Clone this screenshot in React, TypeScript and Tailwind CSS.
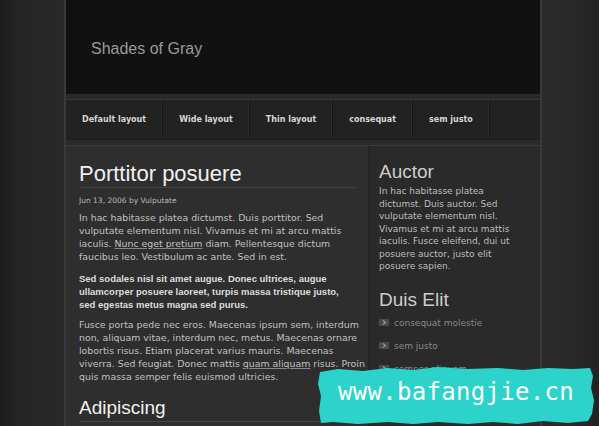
import type { ReactNode } from 'react';

const navItems = ['Default layout', 'Wide layout', 'Thin layout', 'consequat', 'sem justo'];

const links = ['consequat molestie', 'sem justo', 'semper aliquam'];

function Arrow() {
  return (
    <svg width="10" height="7" viewBox="0 0 10 7" className="shrink-0">
      <rect x="0" y="0" width="10" height="7" fill="#4a4a4a" />
      <path d="M4 1.5 L6.5 3.5 L4 5.5" fill="none" stroke="#9a9a9a" strokeWidth="1.2" />
    </svg>
  );
}

function Heading({ children, className }: { children: ReactNode; className?: string }) {
  return (
    <h2
      className={
        'font-["Liberation_Sans",Arial,sans-serif] text-[#f0f0f0] border-b border-[#444444] whitespace-nowrap ' +
        (className ?? '')
      }
    >
      {children}
    </h2>
  );
}

function Watermark() {
  return (
    <div className="absolute left-[318px] top-[366px] w-[276px] h-[60px]">
      <svg width="276" height="60" viewBox="0 0 276 60" className="absolute inset-0">
        <path
          d="M2 6 L20 3 L45 5 L70 2 L95 4 L120 1 L150 3 L180 2 L205 4 L230 2 L255 3 L272 2 L275 10 L273 22 L276 34 L274 48 L270 55 L250 57 L225 55 L200 58 L175 56 L150 58 L120 56 L95 58 L70 56 L40 58 L15 56 L3 57 L1 45 L3 30 L0 18 Z"
          fill="#2bd3ca"
        />
      </svg>
      <div className="absolute left-[20px] top-[11px] font-['DejaVu_Sans_Mono',monospace] text-[24px] leading-[30px] text-white tracking-[0.3px]">
        www.bafangjie.cn
      </div>
    </div>
  );
}

export default function App() {
  return (
    <div className="relative w-[599px] h-[426px] overflow-hidden bg-[linear-gradient(90deg,#1d1d1d_0px,#252525_20px,#282828_60px,#2a2a2a_560px,#232323_599px)]">
      <div className="ml-[64px] w-[478px] h-full border-x-2 border-[#3a3a3a] bg-[#2a2a2a] flex flex-col">
        {/* header */}
        <div className="shrink-0 h-[94px] bg-[#111111] pl-[25px] pt-[39px]">
          <div className="font-['Liberation_Sans',Arial,sans-serif] text-[16px] leading-[20px] text-[#9a9a9a]">
            Shades of Gray
          </div>
        </div>

        {/* nav */}
        <div className="shrink-0 mt-[5px] h-[41px] border-t border-[#383838] border-b border-b-[#1c1c1c] bg-[#222222] flex">
          {navItems.map((item) => (
            <div
              key={item}
              className="h-full px-[16px] flex items-center border-r border-[#181818] shadow-[inset_-1px_0_0_#2c2c2c] font-['DejaVu_Sans',Verdana,sans-serif] font-bold text-[8px] text-[#d6d6d6]"
            >
              {item}
            </div>
          ))}
        </div>

        {/* content */}
        <div className="shrink-0 mt-[5px] flex-1 flex border-t border-[#3a3a3a]">
          <div className="w-[302px] overflow-hidden bg-[#2e2e2e] px-[13px] pt-[17px]">
            <Heading className="text-[22px] leading-[22px] pb-[2px]">Porttitor posuere</Heading>
            <div className="mt-[8px] font-['DejaVu_Sans',Verdana,sans-serif] text-[7.5px] leading-[10px] text-[#bbbbbb]">
              Jun 13, 2006 by Vulputate
            </div>
            <div className="font-['DejaVu_Sans',Verdana,sans-serif] text-[9.4px] leading-[13px] text-[#c0c0c0] whitespace-nowrap">
              <p className="mt-[5px]">
                In hac habitasse platea dictumst. Duis porttitor. Sed
                <br />
                vulputate elementum nisl. Vivamus et mi at arcu mattis
                <br />
                iaculis. <span className="underline decoration-[#888888]">Nunc eget pretium</span> diam. Pellentesque
                dictum
                <br />
                faucibus leo. Vestibulum ac ante. Sed in est.
              </p>
              <p className="mt-[9px] font-['Liberation_Sans',Arial,sans-serif] font-bold text-[9.5px] text-[#dddddd]">
                Sed sodales nisl sit amet augue. Donec ultrices, augue
                <br />
                ullamcorper posuere laoreet, turpis massa tristique justo,
                <br />
                sed egestas metus magna sed purus.
              </p>
              <p className="mt-[7px]">
                Fusce porta pede nec eros. Maecenas ipsum sem, interdum
                <br />
                non, aliquam vitae, interdum nec, metus. Maecenas ornare
                <br />
                lobortis risus. Etiam placerat varius mauris. Maecenas
                <br />
                viverra. Sed feugiat. Donec mattis{' '}
                <span className="underline decoration-[#888888]">quam aliquam</span> risus. Proin
                <br />
                quis massa semper felis euismod ultricies.
              </p>
            </div>
            <Heading className="mt-[15px] text-[19px] leading-[19px] pb-[4px]">Adipiscing</Heading>
          </div>

          <div className="flex-1 border-l-2 border-[#262626] bg-[#2a2a2a] pl-[9px] pr-[4px] pt-[16px]">
            <h3 className="font-['Liberation_Sans',Arial,sans-serif] text-[19px] leading-[19px] text-[#cccccc]">
              Auctor
            </h3>
            <p className="mt-[4px] font-['DejaVu_Sans',Verdana,sans-serif] text-[9px] leading-[12.5px] text-[#bdbdbd] whitespace-nowrap">
              In hac habitasse platea
              <br />
              dictumst. Duis auctor. Sed
              <br />
              vulputate elementum nisl.
              <br />
              Vivamus et mi at arcu mattis
              <br />
              iaculis. Fusce eleifend, dui ut
              <br />
              posuere auctor, justo elit
              <br />
              posuere sapien.
            </p>
            <h3 className="mt-[17px] font-['Liberation_Sans',Arial,sans-serif] text-[19px] leading-[19px] text-[#cccccc]">
              Duis Elit
            </h3>
            <ul className="mt-[8px] flex flex-col gap-[11px]">
              {links.map((l) => (
                <li
                  key={l}
                  className="flex items-center gap-[5px] font-['DejaVu_Sans',Verdana,sans-serif] text-[9px] leading-[12px] text-[#888888]"
                >
                  <Arrow />
                  {l}
                </li>
              ))}
            </ul>
            <h3 className="mt-[18px] font-['Liberation_Sans',Arial,sans-serif] text-[19px] leading-[19px] text-[#cccccc]">
              Quisque
            </h3>
          </div>
        </div>
      </div>
      <Watermark />
    </div>
  );
}
